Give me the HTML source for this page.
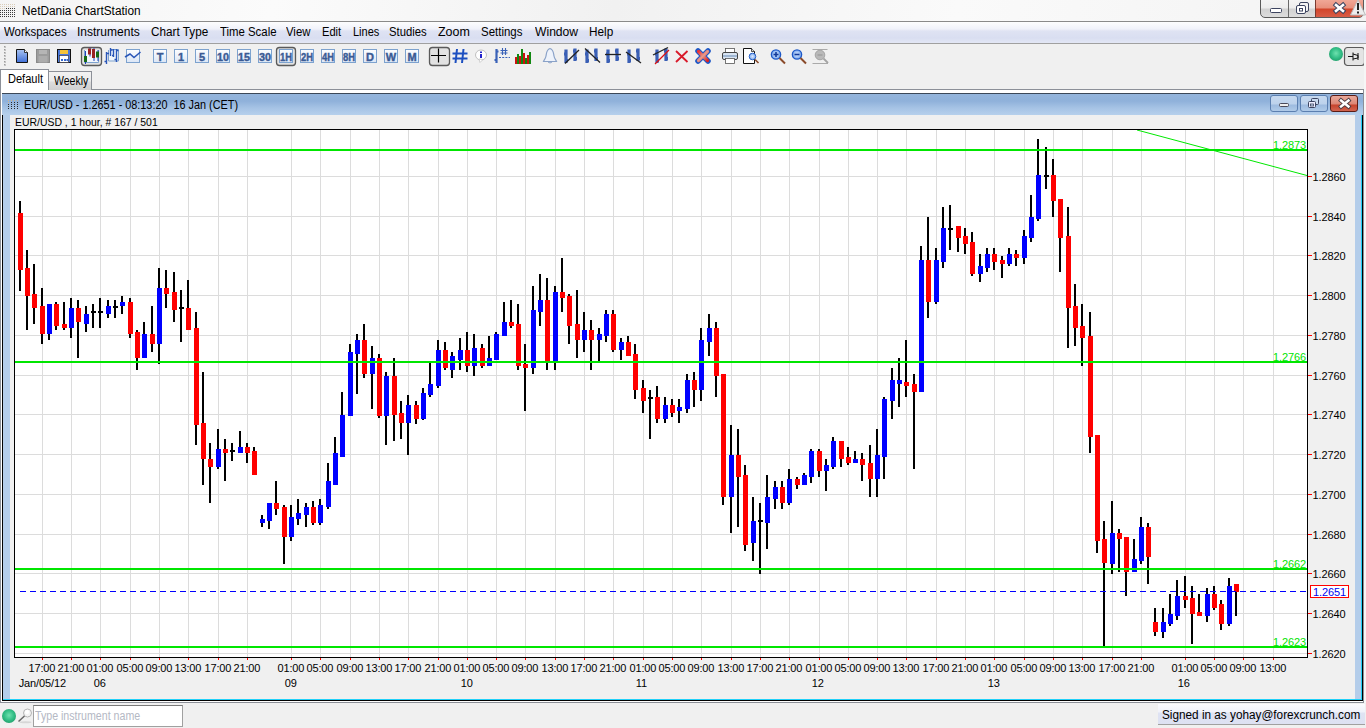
<!DOCTYPE html>
<html><head><meta charset="utf-8"><title>NetDania ChartStation</title>
<style>
html,body{margin:0;padding:0}
body{width:1366px;height:728px;position:relative;overflow:hidden;background:#f0f0f0;font-family:"Liberation Sans",Arial,sans-serif;font-size:12px;color:#000}
.a{position:absolute}
.t{position:absolute;white-space:nowrap;line-height:1}
#titlebar{left:0;top:0;width:1366px;height:21px;background:linear-gradient(100deg,#f4f4f4 0%,#fbfbfb 20%,#f1f1f1 45%,#fafafa 70%,#f3f3f3 100%)}
#menubar{left:0;top:22px;width:1366px;height:21px;background:linear-gradient(#fdfdfe 0,#f0f2fa 7px,#dfe3f3 9px,#d9def1 16px,#e3e7f5 21px)}
.mi{position:absolute;top:26px;font-size:12.5px;white-space:nowrap;line-height:14px;color:#000}
.tb{position:absolute;top:49px;width:12px;height:12px;border:1px solid #7da2ce;background:linear-gradient(#fdfeff,#dfe9f7);font:bold 10px "Liberation Sans",sans-serif;color:#3a5a94;text-align:center;line-height:12px;letter-spacing:-0.5px}
.ax{position:absolute;font-size:11px;line-height:11px;white-space:nowrap;color:#000;letter-spacing:-0.11px}
</style></head><body>

<div class="a" id="titlebar"></div>
<div class="a" style="left:0;top:21px;width:1366px;height:1px;background:#8a8a8a"></div>
<svg class="a" style="left:0;top:3px" width="16" height="15" shape-rendering="crispEdges"><rect x="0" y="1" width="1" height="1" fill="#d9ccb8"/><rect x="0" y="3" width="1" height="1" fill="#d9ccb8"/><rect x="0" y="5" width="1" height="1" fill="#d9ccb8"/><rect x="0" y="7" width="1" height="1" fill="#3a3a3a"/><rect x="0" y="9" width="1" height="1" fill="#3a3a3a"/><rect x="0" y="11" width="1" height="1" fill="#3a3a3a"/><rect x="0" y="13" width="1" height="1" fill="#3a3a3a"/><rect x="2" y="1" width="1" height="1" fill="#d9ccb8"/><rect x="2" y="3" width="1" height="1" fill="#d9ccb8"/><rect x="2" y="5" width="1" height="1" fill="#d9ccb8"/><rect x="2" y="7" width="1" height="1" fill="#3a3a3a"/><rect x="2" y="9" width="1" height="1" fill="#3a3a3a"/><rect x="2" y="11" width="1" height="1" fill="#3a3a3a"/><rect x="2" y="13" width="1" height="1" fill="#3a3a3a"/><rect x="4" y="1" width="1" height="1" fill="#d9ccb8"/><rect x="4" y="3" width="1" height="1" fill="#d9ccb8"/><rect x="4" y="5" width="1" height="1" fill="#d9ccb8"/><rect x="4" y="7" width="1" height="1" fill="#3a3a3a"/><rect x="4" y="9" width="1" height="1" fill="#3a3a3a"/><rect x="4" y="11" width="1" height="1" fill="#3a3a3a"/><rect x="4" y="13" width="1" height="1" fill="#3a3a3a"/><rect x="6" y="1" width="1" height="1" fill="#d9ccb8"/><rect x="6" y="3" width="1" height="1" fill="#d9ccb8"/><rect x="6" y="5" width="1" height="1" fill="#3a3a3a"/><rect x="6" y="7" width="1" height="1" fill="#3a3a3a"/><rect x="6" y="9" width="1" height="1" fill="#3a3a3a"/><rect x="6" y="11" width="1" height="1" fill="#3a3a3a"/><rect x="6" y="13" width="1" height="1" fill="#3a3a3a"/><rect x="8" y="1" width="1" height="1" fill="#d9ccb8"/><rect x="8" y="3" width="1" height="1" fill="#d9ccb8"/><rect x="8" y="5" width="1" height="1" fill="#3a3a3a"/><rect x="8" y="7" width="1" height="1" fill="#3a3a3a"/><rect x="8" y="9" width="1" height="1" fill="#3a3a3a"/><rect x="8" y="11" width="1" height="1" fill="#3a3a3a"/><rect x="8" y="13" width="1" height="1" fill="#3a3a3a"/><rect x="10" y="1" width="1" height="1" fill="#d9ccb8"/><rect x="10" y="3" width="1" height="1" fill="#d9ccb8"/><rect x="10" y="5" width="1" height="1" fill="#3a3a3a"/><rect x="10" y="7" width="1" height="1" fill="#3a3a3a"/><rect x="10" y="9" width="1" height="1" fill="#3a3a3a"/><rect x="10" y="11" width="1" height="1" fill="#3a3a3a"/><rect x="10" y="13" width="1" height="1" fill="#3a3a3a"/><rect x="12" y="1" width="1" height="1" fill="#d9ccb8"/><rect x="12" y="3" width="1" height="1" fill="#d9ccb8"/><rect x="12" y="5" width="1" height="1" fill="#3a3a3a"/><rect x="12" y="7" width="1" height="1" fill="#3a3a3a"/><rect x="12" y="9" width="1" height="1" fill="#3a3a3a"/><rect x="12" y="11" width="1" height="1" fill="#3a3a3a"/><rect x="12" y="13" width="1" height="1" fill="#3a3a3a"/><rect x="14" y="1" width="1" height="1" fill="#d9ccb8"/><rect x="14" y="3" width="1" height="1" fill="#d9ccb8"/><rect x="14" y="5" width="1" height="1" fill="#3a3a3a"/><rect x="14" y="7" width="1" height="1" fill="#3a3a3a"/><rect x="14" y="9" width="1" height="1" fill="#3a3a3a"/><rect x="14" y="11" width="1" height="1" fill="#3a3a3a"/><rect x="14" y="13" width="1" height="1" fill="#3a3a3a"/></svg>
<div class="t" id="title" style="left:22px;top:4px;font-size:12px;line-height:14px;color:#000;transform-origin:0 0;transform:scaleX(0.9877)">NetDania ChartStation</div>
<div class="a" style="left:1260px;top:-4px;width:102px;height:20px;border:1px solid #5a5a5a;border-radius:0 0 5px 5px;background:linear-gradient(#f6f6f6 0,#ededed 11px,#d2d2d2 12px,#dedede 21px);overflow:hidden">
<div class="a" style="left:55px;top:0;width:48px;height:21px;background:linear-gradient(#f3b0a0 0,#e8907c 11px,#d2452a 12px,#d9604a 21px)"></div>
<div class="a" style="left:27px;top:0;width:1px;height:21px;background:#6a6a6a"></div>
<div class="a" style="left:54px;top:0;width:1px;height:21px;background:#7a3a30"></div>
</div>
<svg class="a" style="left:1262px;top:0" width="104" height="20">
<rect x="8.5" y="8.5" width="11" height="4" rx="1" fill="#fff" stroke="#3c4460"/>
<rect x="37.500" y="2.5" width="9" height="9" rx="1.5" fill="#f3f3f3" stroke="#3c4460"/>
<rect x="34.500" y="5.5" width="9" height="8" rx="1.5" fill="#fff" stroke="#3c4460"/>
<rect x="37.500" y="8.5" width="3" height="2.5" fill="#fff" stroke="#3c4460"/>
<path d="M74 5 L81 11 M81 5 L74 11" stroke="#3c4460" stroke-width="4.600" stroke-linecap="square"/><path d="M74 5 L81 11 M81 5 L74 11" stroke="#fff" stroke-width="2.600" stroke-linecap="square"/>
<path d="M96 0 L103.500 15 L88.500 15 Z" fill="#eee" stroke="#bbb"/>
<rect x="95" y="3" width="2" height="7" fill="#222"/><rect x="95" y="11.500" width="2" height="2" fill="#222"/>
</svg>
<div class="a" id="menubar"></div>
<div class="a" style="left:0;top:43px;width:1366px;height:1px;background:#a0a0a0"></div>
<div class="t" id="m0" style="left:4.2px;top:25px;font-size:12px;line-height:14px;color:#000;transform-origin:0 0;transform:scaleX(0.9512)">Workspaces</div>
<div class="t" id="m1" style="left:76.8px;top:25px;font-size:12px;line-height:14px;color:#000;transform-origin:0 0;transform:scaleX(1.0015)">Instruments</div>
<div class="t" id="m2" style="left:150.5px;top:25px;font-size:12px;line-height:14px;color:#000;transform-origin:0 0;transform:scaleX(0.9780)">Chart Type</div>
<div class="t" id="m3" style="left:219.5px;top:25px;font-size:12px;line-height:14px;color:#000;transform-origin:0 0;transform:scaleX(0.9483)">Time Scale</div>
<div class="t" id="m4" style="left:286px;top:25px;font-size:12px;line-height:14px;color:#000;transform-origin:0 0;transform:scaleX(0.9459)">View</div>
<div class="t" id="m5" style="left:321.5px;top:25px;font-size:12px;line-height:14px;color:#000;transform-origin:0 0;transform:scaleX(0.9281)">Edit</div>
<div class="t" id="m6" style="left:352.5px;top:25px;font-size:12px;line-height:14px;color:#000;transform-origin:0 0;transform:scaleX(0.9168)">Lines</div>
<div class="t" id="m7" style="left:388.9px;top:25px;font-size:12px;line-height:14px;color:#000;transform-origin:0 0;transform:scaleX(0.9418)">Studies</div>
<div class="t" id="m8" style="left:437.6px;top:25px;font-size:12px;line-height:14px;color:#000;transform-origin:0 0;transform:scaleX(1.0395)">Zoom</div>
<div class="t" id="m9" style="left:481.3px;top:25px;font-size:12px;line-height:14px;color:#000;transform-origin:0 0;transform:scaleX(0.9548)">Settings</div>
<div class="t" id="m10" style="left:534.5px;top:25px;font-size:12px;line-height:14px;color:#000;transform-origin:0 0;transform:scaleX(1.0097)">Window</div>
<div class="t" id="m11" style="left:589.4px;top:25px;font-size:12px;line-height:14px;color:#000;transform-origin:0 0;transform:scaleX(0.9803)">Help</div>
<svg class="a" style="left:0;top:44px" width="860" height="25" viewBox="0 44 860 25"><rect x="4" y="46" width="2" height="2" fill="#c4c4c4"/><rect x="4" y="46" width="1" height="1" fill="#9a9a9a"/><rect x="4" y="49" width="2" height="2" fill="#c4c4c4"/><rect x="4" y="49" width="1" height="1" fill="#9a9a9a"/><rect x="4" y="52" width="2" height="2" fill="#c4c4c4"/><rect x="4" y="52" width="1" height="1" fill="#9a9a9a"/><rect x="4" y="55" width="2" height="2" fill="#c4c4c4"/><rect x="4" y="55" width="1" height="1" fill="#9a9a9a"/><rect x="4" y="58" width="2" height="2" fill="#c4c4c4"/><rect x="4" y="58" width="1" height="1" fill="#9a9a9a"/><rect x="4" y="61" width="2" height="2" fill="#c4c4c4"/><rect x="4" y="61" width="1" height="1" fill="#9a9a9a"/><rect x="4" y="64" width="2" height="2" fill="#c4c4c4"/><rect x="4" y="64" width="1" height="1" fill="#9a9a9a"/><defs>
<linearGradient id="gb" x1="0" y1="0" x2="0" y2="1"><stop offset="0" stop-color="#a9c4f2"/><stop offset="1" stop-color="#3f6fd8"/></linearGradient>
<linearGradient id="gbtn" x1="0" y1="0" x2="0" y2="1"><stop offset="0" stop-color="#fdfeff"/><stop offset="1" stop-color="#dbe6f6"/></linearGradient>
<linearGradient id="gx" x1="0" y1="0" x2="1" y2="1"><stop offset="0" stop-color="#e33"/><stop offset="0.5" stop-color="#e89a8a"/><stop offset="1" stop-color="#d22"/></linearGradient>
<radialGradient id="gl"><stop offset="0" stop-color="#dceaff"/><stop offset="1" stop-color="#7aa8ee"/></radialGradient>
</defs><path d="M16.500 49.500 L24.500 49.500 L27.500 52.500 L27.500 62.500 L16.500 62.500 Z" fill="url(#gb)" stroke="#111" stroke-width="1"/><path d="M24.500 49.500 L24.500 52.500 L27.500 52.500" fill="#fff" stroke="#111" stroke-width="0.8"/><rect x="36.500" y="49.500" width="13" height="13" fill="#9c9c9c" stroke="#8a8a8a"/><rect x="39" y="50" width="8" height="4" fill="#b5b5b5"/><rect x="38.500" y="56" width="9" height="6.500" fill="#acacac"/><rect x="57.500" y="49.500" width="13" height="13" fill="#4a78d8" stroke="#111"/><rect x="60" y="50" width="8" height="4" fill="#f5c33a"/><rect x="59.500" y="55.500" width="9" height="7" fill="#fff" stroke="#223" stroke-width="0.600"/><rect x="61" y="59" width="2" height="2" fill="#36c"/><rect x="64" y="59" width="2" height="2" fill="#36c"/><rect x="66.500" y="59" width="1.500" height="2" fill="#36c"/><rect x="81.500" y="47.500" width="20" height="18" rx="3" fill="#e2e2e2" stroke="#5a5a5a" stroke-width="1.300"/><path d="M84.500 50 L84.500 62.500 L98.500 62.500 L98.500 50" fill="#f2f6fc" stroke="#7da2ce" stroke-width="1"/><rect x="85" y="51" width="1" height="13" fill="#24b"/><rect x="84" y="56" width="3" height="6" fill="#176a17"/><rect x="89.500" y="47.500" width="1" height="9" fill="#24b"/><rect x="88" y="48.500" width="3" height="6" fill="#922"/><rect x="93.500" y="48" width="1" height="13" fill="#24b"/><rect x="92" y="49" width="3" height="9" fill="#922"/><rect x="97.500" y="50" width="1" height="11" fill="#24b"/><rect x="96" y="51.500" width="3" height="6" fill="#176a17"/><path d="M108.500 50 L108.500 61 L118.500 61 L118.500 49.500 L110 49.500" fill="#f2f6fc" stroke="#7da2ce"/><path d="M106.500 52 L106.500 64 M104.500 61.500 L106.500 61.500 M106.500 53.500 L109 53.500 M110.500 48 L110.500 56 M110.500 50 L112.500 50 M113.500 49 L113.500 57 M112 55.500 L113.500 55.500 M116.500 49 L116.500 62 M114.500 59.500 L116.500 59.500 M116.500 50.500 L118.500 50.500" stroke="#2a56b8" stroke-width="1.400" fill="none"/><rect x="126.500" y="49.500" width="13" height="13" fill="url(#gbtn)" stroke="#7da2ce"/><path d="M125 57 L130 54 L134 57.500 L140.500 52" fill="none" stroke="#2a56b8" stroke-width="1.500"/><rect x="153.5" y="49.500" width="13" height="13" fill="url(#gbtn)" stroke="#7da2ce"/><text x="160" y="60.500" text-anchor="middle" font-family="Liberation Sans,sans-serif" font-weight="bold" font-size="11" fill="#3a5a94" stroke="#3a5a94" stroke-width="0.400">T</text><rect x="174.5" y="49.500" width="13" height="13" fill="url(#gbtn)" stroke="#7da2ce"/><text x="181" y="60.500" text-anchor="middle" font-family="Liberation Sans,sans-serif" font-weight="bold" font-size="11" fill="#3a5a94" stroke="#3a5a94" stroke-width="0.400">1</text><rect x="195.5" y="49.500" width="13" height="13" fill="url(#gbtn)" stroke="#7da2ce"/><text x="202" y="60.500" text-anchor="middle" font-family="Liberation Sans,sans-serif" font-weight="bold" font-size="11" fill="#3a5a94" stroke="#3a5a94" stroke-width="0.400">5</text><rect x="216.5" y="49.500" width="13" height="13" fill="url(#gbtn)" stroke="#7da2ce"/><text x="223" y="60.500" text-anchor="middle" font-family="Liberation Sans,sans-serif" font-weight="bold" font-size="11" textLength="12" lengthAdjust="spacingAndGlyphs" fill="#3a5a94" stroke="#3a5a94" stroke-width="0.400">10</text><rect x="237.5" y="49.500" width="13" height="13" fill="url(#gbtn)" stroke="#7da2ce"/><text x="244" y="60.500" text-anchor="middle" font-family="Liberation Sans,sans-serif" font-weight="bold" font-size="11" textLength="12" lengthAdjust="spacingAndGlyphs" fill="#3a5a94" stroke="#3a5a94" stroke-width="0.400">15</text><rect x="258.5" y="49.500" width="13" height="13" fill="url(#gbtn)" stroke="#7da2ce"/><text x="265" y="60.500" text-anchor="middle" font-family="Liberation Sans,sans-serif" font-weight="bold" font-size="11" textLength="12" lengthAdjust="spacingAndGlyphs" fill="#3a5a94" stroke="#3a5a94" stroke-width="0.400">30</text><rect x="276.5" y="47.500" width="19" height="18" rx="3" fill="#e2e2e2" stroke="#5a5a5a" stroke-width="1.300"/><rect x="279.5" y="49.500" width="13" height="13" fill="url(#gbtn)" stroke="#7da2ce"/><text x="286" y="60.500" text-anchor="middle" font-family="Liberation Sans,sans-serif" font-weight="bold" font-size="11" textLength="12" lengthAdjust="spacingAndGlyphs" fill="#3a5a94" stroke="#3a5a94" stroke-width="0.400">1H</text><rect x="300.5" y="49.500" width="13" height="13" fill="url(#gbtn)" stroke="#7da2ce"/><text x="307" y="60.500" text-anchor="middle" font-family="Liberation Sans,sans-serif" font-weight="bold" font-size="11" textLength="12" lengthAdjust="spacingAndGlyphs" fill="#3a5a94" stroke="#3a5a94" stroke-width="0.400">2H</text><rect x="321.5" y="49.500" width="13" height="13" fill="url(#gbtn)" stroke="#7da2ce"/><text x="328" y="60.500" text-anchor="middle" font-family="Liberation Sans,sans-serif" font-weight="bold" font-size="11" textLength="12" lengthAdjust="spacingAndGlyphs" fill="#3a5a94" stroke="#3a5a94" stroke-width="0.400">4H</text><rect x="342.5" y="49.500" width="13" height="13" fill="url(#gbtn)" stroke="#7da2ce"/><text x="349" y="60.500" text-anchor="middle" font-family="Liberation Sans,sans-serif" font-weight="bold" font-size="11" textLength="12" lengthAdjust="spacingAndGlyphs" fill="#3a5a94" stroke="#3a5a94" stroke-width="0.400">8H</text><rect x="363.5" y="49.500" width="13" height="13" fill="url(#gbtn)" stroke="#7da2ce"/><text x="370" y="60.500" text-anchor="middle" font-family="Liberation Sans,sans-serif" font-weight="bold" font-size="11" fill="#3a5a94" stroke="#3a5a94" stroke-width="0.400">D</text><rect x="384.5" y="49.500" width="13" height="13" fill="url(#gbtn)" stroke="#7da2ce"/><text x="391" y="60.500" text-anchor="middle" font-family="Liberation Sans,sans-serif" font-weight="bold" font-size="11" fill="#3a5a94" stroke="#3a5a94" stroke-width="0.400">W</text><rect x="405.5" y="49.500" width="13" height="13" fill="url(#gbtn)" stroke="#7da2ce"/><text x="412" y="60.500" text-anchor="middle" font-family="Liberation Sans,sans-serif" font-weight="bold" font-size="11" fill="#3a5a94" stroke="#3a5a94" stroke-width="0.400">M</text><rect x="429.500" y="47.500" width="20" height="18" rx="3" fill="#e2e2e2" stroke="#5a5a5a" stroke-width="1.300"/><path d="M431 55.500 L446 55.500 M438.500 48.500 L438.500 62.500" stroke="#000" stroke-width="1.200"/><path d="M457 49 L455.500 63 M463.500 49 L462 63 M452.500 53.500 L467.500 53.500 M452.500 58.500 L467.500 58.500" stroke="#1c4fc0" stroke-width="2" fill="none"/><ellipse cx="481" cy="55" rx="5.500" ry="5" fill="#fff" stroke="#c0c0c0"/><path d="M479 59 L480 62.500 L483 59.500 Z" fill="#fff" stroke="#c0c0c0" stroke-width="0.700"/><rect x="480" y="54" width="2" height="4" fill="#22c"/><rect x="480" y="51.500" width="2" height="1.500" fill="#22c"/><path d="M496.500 49 L496.500 63 M494.500 60 L496.500 60 M496.500 51.500 L498.500 51.500" stroke="#3a62b8" stroke-width="2.200" fill="none"/><path d="M502.500 48 L502.500 55 M505.500 48 L505.500 55 M500.500 50.500 L507.500 50.500 M500.500 53 L507.500 53" stroke="#3a62b8" stroke-width="1.100" fill="none"/><path d="M499 57.500 L510 57.500" stroke="#3a62b8" stroke-width="1.200" stroke-dasharray="2 1.200"/><rect x="515" y="57" width="2" height="7" fill="#c11"/><rect x="517" y="54" width="2" height="10" fill="#181"/><rect x="519" y="56" width="2" height="8" fill="#c11"/><rect x="521" y="49" width="2" height="15" fill="#181"/><rect x="523" y="53" width="2" height="11" fill="#c11"/><rect x="525" y="58" width="2" height="6" fill="#181"/><rect x="527" y="55" width="2" height="9" fill="#c11"/><rect x="529" y="52" width="2" height="12" fill="#181"/><path d="M550 48.500 C546.500 49.500 546.500 53 546 56 C545.500 59 544 60 543.500 61.500 L556.500 61.500 C556 60 554.500 59 554 56 C553.500 53 553.500 49.500 550 48.500 Z" fill="#eef3fb" stroke="#8aa2c8" stroke-width="1.200"/><path d="M548 62 Q550 64 552 62" stroke="#8aa2c8" fill="none"/><path d="M566 49.500 L566 63 M564 54 L566 54 M566 60.500 L568 60.500 M575 48.500 L575 61 M573 51 L575 51 M575 58.500 L577 58.500" stroke="#3a5fb5" stroke-width="3.200" fill="none"/><path d="M565 63.500 L579 50" stroke="#222" stroke-width="1.300"/><path d="M587 49.500 L587 63 M585 54 L587 54 M587 60.500 L589 60.500 M596 48.500 L596 61 M594 51 L596 51 M596 58.500 L598 58.500" stroke="#3a5fb5" stroke-width="3.200" fill="none"/><path d="M585 48.500 L600 62.500" stroke="#222" stroke-width="1.300"/><path d="M608 49.500 L608 63 M606 54 L608 54 M608 60.500 L610 60.500 M617 48.500 L617 61 M615 51 L617 51 M617 58.500 L619 58.500" stroke="#3a5fb5" stroke-width="3.200" fill="none"/><path d="M605 54.500 L621 54.500" stroke="#222" stroke-width="1.300"/><path d="M629 49.500 L629 63 M627 54 L629 54 M629 60.500 L631 60.500 M638 48.500 L638 61 M636 51 L638 51 M638 58.500 L640 58.500" stroke="#3a5fb5" stroke-width="3.200" fill="none"/><path d="M626 52 L641 63" stroke="#222" stroke-width="1.300"/><path d="M657 49.500 L657 63 M655 54 L657 54 M657 60.500 L659 60.500 M666 48.500 L666 61 M664 51 L666 51 M666 58.500 L668 58.500" stroke="#3a5fb5" stroke-width="3.200" fill="none"/><path d="M653 55 L668 47.500" stroke="#222" stroke-width="1.300"/><path d="M655 64 L669 50" stroke="#d11" stroke-width="1.300"/><path d="M676 51 L687.500 62 M687.500 51 L676 62" stroke="#d91a2a" stroke-width="1.800"/><path d="M698 51 L708 61 M708 51 L698 61" stroke="#1c58c8" stroke-width="5.500" stroke-linecap="round"/><path d="M698.500 51.500 L707.500 60.500 M707.500 51.500 L698.500 60.500" stroke="url(#gx)" stroke-width="3.200" stroke-linecap="round"/><rect x="725.500" y="48.500" width="9" height="5" fill="#fff" stroke="#555" stroke-width="0.800"/><rect x="722.500" y="52.500" width="15" height="7" rx="1.500" fill="#d8e4f2" stroke="#444"/><rect x="723" y="55" width="14" height="2" fill="#9fb6d2"/><rect x="725.500" y="58.500" width="9" height="5" fill="#fff" stroke="#555" stroke-width="0.800"/><path d="M743.500 48.500 L751.500 48.500 L754.500 51.500 L754.500 63.500 L743.500 63.500 Z" fill="#fff" stroke="#111"/><path d="M751.500 48.500 L751.500 51.500 L754.500 51.500" fill="#ddd" stroke="#111" stroke-width="0.700"/><circle cx="752.500" cy="56.500" r="3.300" fill="url(#gl)" stroke="#2a62c8" stroke-width="1"/><path d="M755 59.500 L758.500 63" stroke="#8a4a2a" stroke-width="1.600"/><circle cx="776" cy="54.500" r="4.600" fill="url(#gl)" stroke="#1c58c8" stroke-width="1.400"/><path d="M779.5 58 L785 63.500" stroke="#8a4a2a" stroke-width="2"/><path d="M773.5 54.500 L778.5 54.500" stroke="#123a9a" stroke-width="1.600"/><path d="M776 52 L776 57" stroke="#123a9a" stroke-width="1.600"/><circle cx="797" cy="54.500" r="4.600" fill="url(#gl)" stroke="#1c58c8" stroke-width="1.400"/><path d="M800.5 58 L806 63.500" stroke="#8a4a2a" stroke-width="2"/><path d="M794.5 54.500 L799.5 54.500" stroke="#123a9a" stroke-width="1.600"/><path d="M812.500 49.500 L827.500 49.500 M812.500 63.500 L828 63.500" stroke="#aaa" stroke-width="1"/><circle cx="820" cy="55" r="4.800" fill="#b9b9b9" stroke="#a4a4a4"/><path d="M823.500 58.500 L828 63" stroke="#a4a4a4" stroke-width="1.800"/><path d="M817.500 55 L822.500 55" stroke="#999" stroke-width="1.200"/></svg><div class="a" style="left:1329px;top:47px;width:14px;height:14px;border-radius:50%;background:radial-gradient(circle at 50% 45%,#6fe0ae 0,#35c088 45%,#138a58 100%)"></div><svg class="a" style="left:1343px;top:46px" width="23" height="22"><rect x="1.500" y="1.500" width="20" height="18" rx="3" fill="#e4e4e4" stroke="#5a5a5a" stroke-width="1.200"/><path d="M5 10.500 L10 10.500 M10 6.500 L10 14.500 M10 8 L15 9.500 L15 12 L10 13 M15 7 L15 14" stroke="#111" stroke-width="1" fill="none"/></svg>
<div class="a" style="left:0;top:89px;width:1364px;height:1px;background:#8c9098"></div>
<div class="a" style="left:0;top:90px;width:1px;height:613px;background:#8c9098"></div>
<div class="a" style="left:1px;top:90px;width:1362px;height:612px;background:#fff"></div>
<div class="a" style="left:1363px;top:89px;width:1px;height:614px;background:#8c9098"></div>
<div class="a" style="left:0;top:702px;width:1364px;height:1px;background:#8c9098"></div>
<div class="a" style="left:1364px;top:44px;width:2px;height:660px;background:#f6f6f6"></div>
<div class="a" style="left:49px;top:71px;width:42px;height:18px;border:1px solid #8c9098;border-bottom:none;border-left:none;background:linear-gradient(#f2f2f2 0,#ebebeb 9px,#dcdcdc 10px,#d0d0d0 18px)"></div>
<div class="a" style="left:0px;top:69px;width:47px;height:20px;border:1px solid #8c9098;border-bottom:none;background:#fff"></div>

<div class="t" id="tab1" style="left:7.5px;top:72px;font-size:12px;line-height:14px;color:#000;transform-origin:0 0;transform:scaleX(0.9203)">Default</div>
<div class="t" id="tab2" style="left:53.7px;top:73.5px;font-size:12px;line-height:14px;color:#000;transform-origin:0 0;transform:scaleX(0.8767)">Weekly</div>
<div class="a" style="left:2px;top:93px;width:1361px;height:1px;background:#3c4858"></div>
<div class="a" style="left:2px;top:94px;width:1360px;height:605px;background:#b4cdea"></div>
<div class="a" id="ftitle" style="left:2px;top:94px;width:1361px;height:21px;background:linear-gradient(#94b5dc 0,#8fb1da 7px,#a6c3e5 14px,#b6d0ec 21px)"></div>
<div class="a" style="left:2px;top:115px;width:1px;height:586px;background:#000"></div>
<div class="a" style="left:1361px;top:115px;width:1px;height:585px;background:#20d0f8"></div>
<div class="a" style="left:1362px;top:115px;width:1px;height:586px;background:#000"></div>
<div class="a" style="left:3px;top:699px;width:1359px;height:1px;background:#20d0f8"></div>
<div class="a" style="left:2px;top:700px;width:1361px;height:1px;background:#000"></div>
<div class="a" style="left:10px;top:115px;width:1345px;height:584px;background:#f0f0f0"></div>

<div class="t" id="ft" style="left:23.8px;top:98px;font-size:12px;line-height:14px;color:#000;transform-origin:0 0;transform:scaleX(0.9038)">EUR/USD - 1.2651 - 08:13:20&nbsp; 16 Jan (CET)</div>
<div class="t" id="sub" style="left:14.5px;top:117px;font-size:11px;line-height:11px;color:#000;transform-origin:0 0;transform:scaleX(0.9487)">EUR/USD , 1 hour, # 167 / 501</div>
<svg class="a" style="left:7px;top:99px" width="12" height="11" shape-rendering="crispEdges"><rect x="1" y="1" width="1" height="1" fill="#d2b48c"/><rect x="1" y="3" width="1" height="1" fill="#d2b48c"/><rect x="1" y="5" width="1" height="1" fill="#2a2a2a"/><rect x="1" y="7" width="1" height="1" fill="#2a2a2a"/><rect x="1" y="9" width="1" height="1" fill="#2a2a2a"/><rect x="4" y="1" width="1" height="1" fill="#d2b48c"/><rect x="4" y="3" width="1" height="1" fill="#2a2a2a"/><rect x="4" y="5" width="1" height="1" fill="#2a2a2a"/><rect x="4" y="7" width="1" height="1" fill="#2a2a2a"/><rect x="4" y="9" width="1" height="1" fill="#2a2a2a"/><rect x="7" y="1" width="1" height="1" fill="#d2b48c"/><rect x="7" y="3" width="1" height="1" fill="#2a2a2a"/><rect x="7" y="5" width="1" height="1" fill="#2a2a2a"/><rect x="7" y="7" width="1" height="1" fill="#2a2a2a"/><rect x="7" y="9" width="1" height="1" fill="#2a2a2a"/><rect x="10" y="1" width="1" height="1" fill="#d2b48c"/><rect x="10" y="3" width="1" height="1" fill="#2a2a2a"/><rect x="10" y="5" width="1" height="1" fill="#2a2a2a"/><rect x="10" y="7" width="1" height="1" fill="#2a2a2a"/><rect x="10" y="9" width="1" height="1" fill="#2a2a2a"/></svg>
<div class="a" style="left:1270px;top:95px;width:26px;height:15px;border:1px solid #5b7fb0;border-radius:3px;background:linear-gradient(#c6d9ef 0,#bdd2ec 8px,#9dbbdf 9px,#b3cdea 16px)"></div>
<div class="a" style="left:1300px;top:95px;width:26px;height:15px;border:1px solid #5b7fb0;border-radius:3px;background:linear-gradient(#c6d9ef 0,#bdd2ec 8px,#9dbbdf 9px,#b3cdea 16px)"></div>
<div class="a" style="left:1330px;top:95px;width:26px;height:15px;border:1px solid #5a1d16;border-radius:3px;background:linear-gradient(#e9a99b 0,#dc8674 8px,#c6432c 9px,#d46a55 16px)"></div>
<svg class="a" style="left:1270px;top:95px" width="90" height="17">
<rect x="9.5" y="8.5" width="9" height="3" rx="1" fill="#eee" stroke="#4a4a5a"/>
<rect x="41.500" y="3.500" width="7" height="6" rx="1" fill="#c9daef" stroke="#3c4460"/>
<rect x="38.500" y="6.500" width="7" height="6" rx="1" fill="#eef" stroke="#3c4460"/>
<rect x="40.500" y="9" width="3" height="2" fill="#cde" stroke="#3c4460" stroke-width="0.8"/>
<path d="M71 5.500 L78.500 11.500 M78.500 5.500 L71 11.500" stroke="#4a3a40" stroke-width="4.200" stroke-linecap="square"/><path d="M71 5.500 L78.500 11.500 M78.500 5.500 L71 11.500" stroke="#fff" stroke-width="2.400" stroke-linecap="square"/>
</svg>
<svg class="a" style="left:14px;top:129px" width="1294" height="529" viewBox="14 129 1294 529" shape-rendering="crispEdges"><rect x="14" y="129" width="1294" height="529" fill="#fff"/><rect x="42" y="130" width="1" height="527" fill="#dcdcdc"/><rect x="71" y="130" width="1" height="527" fill="#dcdcdc"/><rect x="100" y="130" width="1" height="527" fill="#dcdcdc"/><rect x="130" y="130" width="1" height="527" fill="#dcdcdc"/><rect x="159" y="130" width="1" height="527" fill="#dcdcdc"/><rect x="188" y="130" width="1" height="527" fill="#dcdcdc"/><rect x="218" y="130" width="1" height="527" fill="#dcdcdc"/><rect x="247" y="130" width="1" height="527" fill="#dcdcdc"/><rect x="291" y="130" width="1" height="527" fill="#dcdcdc"/><rect x="320" y="130" width="1" height="527" fill="#dcdcdc"/><rect x="350" y="130" width="1" height="527" fill="#dcdcdc"/><rect x="379" y="130" width="1" height="527" fill="#dcdcdc"/><rect x="408" y="130" width="1" height="527" fill="#dcdcdc"/><rect x="438" y="130" width="1" height="527" fill="#dcdcdc"/><rect x="467" y="130" width="1" height="527" fill="#dcdcdc"/><rect x="496" y="130" width="1" height="527" fill="#dcdcdc"/><rect x="525" y="130" width="1" height="527" fill="#dcdcdc"/><rect x="555" y="130" width="1" height="527" fill="#dcdcdc"/><rect x="584" y="130" width="1" height="527" fill="#dcdcdc"/><rect x="613" y="130" width="1" height="527" fill="#dcdcdc"/><rect x="643" y="130" width="1" height="527" fill="#dcdcdc"/><rect x="672" y="130" width="1" height="527" fill="#dcdcdc"/><rect x="701" y="130" width="1" height="527" fill="#dcdcdc"/><rect x="731" y="130" width="1" height="527" fill="#dcdcdc"/><rect x="760" y="130" width="1" height="527" fill="#dcdcdc"/><rect x="789" y="130" width="1" height="527" fill="#dcdcdc"/><rect x="819" y="130" width="1" height="527" fill="#dcdcdc"/><rect x="848" y="130" width="1" height="527" fill="#dcdcdc"/><rect x="877" y="130" width="1" height="527" fill="#dcdcdc"/><rect x="906" y="130" width="1" height="527" fill="#dcdcdc"/><rect x="936" y="130" width="1" height="527" fill="#dcdcdc"/><rect x="965" y="130" width="1" height="527" fill="#dcdcdc"/><rect x="994" y="130" width="1" height="527" fill="#dcdcdc"/><rect x="1024" y="130" width="1" height="527" fill="#dcdcdc"/><rect x="1053" y="130" width="1" height="527" fill="#dcdcdc"/><rect x="1082" y="130" width="1" height="527" fill="#dcdcdc"/><rect x="1112" y="130" width="1" height="527" fill="#dcdcdc"/><rect x="1141" y="130" width="1" height="527" fill="#dcdcdc"/><rect x="1185" y="130" width="1" height="527" fill="#dcdcdc"/><rect x="1214" y="130" width="1" height="527" fill="#dcdcdc"/><rect x="1243" y="130" width="1" height="527" fill="#dcdcdc"/><rect x="1273" y="130" width="1" height="527" fill="#dcdcdc"/><rect x="15" y="653" width="1292" height="1" fill="#dcdcdc"/><rect x="15" y="613" width="1292" height="1" fill="#dcdcdc"/><rect x="15" y="573" width="1292" height="1" fill="#dcdcdc"/><rect x="15" y="534" width="1292" height="1" fill="#dcdcdc"/><rect x="15" y="494" width="1292" height="1" fill="#dcdcdc"/><rect x="15" y="454" width="1292" height="1" fill="#dcdcdc"/><rect x="15" y="414" width="1292" height="1" fill="#dcdcdc"/><rect x="15" y="375" width="1292" height="1" fill="#dcdcdc"/><rect x="15" y="335" width="1292" height="1" fill="#dcdcdc"/><rect x="15" y="295" width="1292" height="1" fill="#dcdcdc"/><rect x="15" y="255" width="1292" height="1" fill="#dcdcdc"/><rect x="15" y="216" width="1292" height="1" fill="#dcdcdc"/><rect x="15" y="176" width="1292" height="1" fill="#dcdcdc"/><rect x="19" y="201" width="2" height="90" fill="#000"/><rect x="18" y="213" width="5" height="57" fill="#ff0000"/><rect x="26" y="250" width="2" height="80" fill="#000"/><rect x="25" y="268" width="5" height="28" fill="#ff0000"/><rect x="33" y="264" width="2" height="60" fill="#000"/><rect x="32" y="294" width="5" height="14" fill="#ff0000"/><rect x="41" y="288" width="2" height="56" fill="#000"/><rect x="40" y="306" width="5" height="28" fill="#ff0000"/><rect x="48" y="304" width="2" height="36" fill="#000"/><rect x="47" y="304" width="5" height="30" fill="#0000ff"/><rect x="55" y="302" width="2" height="28" fill="#000"/><rect x="54" y="304" width="5" height="22" fill="#ff0000"/><rect x="63" y="302" width="2" height="28" fill="#000"/><rect x="62" y="324" width="5" height="4" fill="#ff0000"/><rect x="70" y="298" width="2" height="40" fill="#000"/><rect x="69" y="308" width="5" height="20" fill="#0000ff"/><rect x="77" y="300" width="2" height="58" fill="#000"/><rect x="76" y="308" width="5" height="14" fill="#ff0000"/><rect x="85" y="306" width="2" height="26" fill="#000"/><rect x="84" y="314" width="5" height="10" fill="#0000ff"/><rect x="92" y="304" width="2" height="24" fill="#000"/><rect x="91" y="311" width="5" height="2" fill="#000"/><rect x="99" y="298" width="2" height="30" fill="#000"/><rect x="98" y="311" width="5" height="2" fill="#000"/><rect x="107" y="300" width="2" height="18" fill="#000"/><rect x="106" y="306" width="5" height="8" fill="#0000ff"/><rect x="114" y="300" width="2" height="18" fill="#000"/><rect x="113" y="306" width="5" height="2" fill="#000"/><rect x="121" y="296" width="2" height="18" fill="#000"/><rect x="120" y="302" width="5" height="4" fill="#0000ff"/><rect x="129" y="298" width="2" height="40" fill="#000"/><rect x="128" y="302" width="5" height="32" fill="#ff0000"/><rect x="136" y="330" width="2" height="40" fill="#000"/><rect x="135" y="332" width="5" height="26" fill="#ff0000"/><rect x="143" y="322" width="2" height="36" fill="#000"/><rect x="142" y="334" width="5" height="24" fill="#0000ff"/><rect x="151" y="306" width="2" height="46" fill="#000"/><rect x="150" y="334" width="5" height="10" fill="#ff0000"/><rect x="158" y="268" width="2" height="96" fill="#000"/><rect x="157" y="288" width="5" height="56" fill="#0000ff"/><rect x="165" y="270" width="2" height="38" fill="#000"/><rect x="164" y="288" width="5" height="6" fill="#ff0000"/><rect x="173" y="272" width="2" height="50" fill="#000"/><rect x="172" y="292" width="5" height="18" fill="#ff0000"/><rect x="180" y="290" width="2" height="52" fill="#000"/><rect x="179" y="307" width="5" height="2" fill="#000"/><rect x="187" y="280" width="2" height="50" fill="#000"/><rect x="186" y="308" width="5" height="22" fill="#ff0000"/><rect x="195" y="312" width="2" height="133" fill="#000"/><rect x="194" y="328" width="5" height="97" fill="#ff0000"/><rect x="202" y="372" width="2" height="113" fill="#000"/><rect x="201" y="423" width="5" height="36" fill="#ff0000"/><rect x="209" y="443" width="2" height="60" fill="#000"/><rect x="208" y="459" width="5" height="8" fill="#ff0000"/><rect x="217" y="429" width="2" height="40" fill="#000"/><rect x="216" y="449" width="5" height="18" fill="#0000ff"/><rect x="224" y="439" width="2" height="42" fill="#000"/><rect x="223" y="449" width="5" height="4" fill="#ff0000"/><rect x="231" y="443" width="2" height="18" fill="#000"/><rect x="230" y="450" width="5" height="2" fill="#000"/><rect x="239" y="431" width="2" height="22" fill="#000"/><rect x="238" y="447" width="5" height="6" fill="#0000ff"/><rect x="246" y="443" width="2" height="20" fill="#000"/><rect x="245" y="447" width="5" height="6" fill="#ff0000"/><rect x="253" y="447" width="2" height="28" fill="#000"/><rect x="252" y="451" width="5" height="24" fill="#ff0000"/><rect x="261" y="515" width="2" height="12" fill="#000"/><rect x="260" y="519" width="5" height="4" fill="#0000ff"/><rect x="268" y="503" width="2" height="26" fill="#000"/><rect x="267" y="503" width="5" height="18" fill="#0000ff"/><rect x="275" y="481" width="2" height="34" fill="#000"/><rect x="274" y="503" width="5" height="6" fill="#ff0000"/><rect x="283" y="505" width="2" height="59" fill="#000"/><rect x="282" y="507" width="5" height="30" fill="#ff0000"/><rect x="290" y="505" width="2" height="36" fill="#000"/><rect x="289" y="517" width="5" height="20" fill="#0000ff"/><rect x="297" y="499" width="2" height="26" fill="#000"/><rect x="296" y="513" width="5" height="6" fill="#0000ff"/><rect x="305" y="503" width="2" height="24" fill="#000"/><rect x="304" y="507" width="5" height="8" fill="#0000ff"/><rect x="312" y="501" width="2" height="24" fill="#000"/><rect x="311" y="507" width="5" height="16" fill="#ff0000"/><rect x="319" y="499" width="2" height="26" fill="#000"/><rect x="318" y="505" width="5" height="18" fill="#0000ff"/><rect x="327" y="463" width="2" height="46" fill="#000"/><rect x="326" y="481" width="5" height="26" fill="#0000ff"/><rect x="334" y="437" width="2" height="48" fill="#000"/><rect x="333" y="453" width="5" height="32" fill="#0000ff"/><rect x="341" y="392" width="2" height="65" fill="#000"/><rect x="340" y="415" width="5" height="42" fill="#0000ff"/><rect x="349" y="344" width="2" height="72" fill="#000"/><rect x="348" y="352" width="5" height="64" fill="#0000ff"/><rect x="356" y="334" width="2" height="60" fill="#000"/><rect x="355" y="340" width="5" height="14" fill="#0000ff"/><rect x="363" y="324" width="2" height="54" fill="#000"/><rect x="362" y="340" width="5" height="34" fill="#ff0000"/><rect x="371" y="346" width="2" height="63" fill="#000"/><rect x="370" y="358" width="5" height="16" fill="#0000ff"/><rect x="378" y="354" width="2" height="64" fill="#000"/><rect x="377" y="358" width="5" height="58" fill="#ff0000"/><rect x="385" y="372" width="2" height="73" fill="#000"/><rect x="384" y="376" width="5" height="40" fill="#0000ff"/><rect x="393" y="358" width="2" height="83" fill="#000"/><rect x="392" y="376" width="5" height="39" fill="#ff0000"/><rect x="400" y="401" width="2" height="38" fill="#000"/><rect x="399" y="413" width="5" height="10" fill="#ff0000"/><rect x="407" y="395" width="2" height="60" fill="#000"/><rect x="406" y="405" width="5" height="18" fill="#0000ff"/><rect x="415" y="401" width="2" height="23" fill="#000"/><rect x="414" y="405" width="5" height="14" fill="#ff0000"/><rect x="422" y="388" width="2" height="32" fill="#000"/><rect x="421" y="393" width="5" height="26" fill="#0000ff"/><rect x="429" y="362" width="2" height="35" fill="#000"/><rect x="428" y="384" width="5" height="11" fill="#0000ff"/><rect x="437" y="340" width="2" height="48" fill="#000"/><rect x="436" y="350" width="5" height="36" fill="#0000ff"/><rect x="444" y="342" width="2" height="28" fill="#000"/><rect x="443" y="350" width="5" height="18" fill="#ff0000"/><rect x="451" y="352" width="2" height="26" fill="#000"/><rect x="450" y="356" width="5" height="14" fill="#0000ff"/><rect x="459" y="338" width="2" height="32" fill="#000"/><rect x="458" y="350" width="5" height="10" fill="#0000ff"/><rect x="466" y="332" width="2" height="40" fill="#000"/><rect x="465" y="350" width="5" height="16" fill="#ff0000"/><rect x="473" y="334" width="2" height="42" fill="#000"/><rect x="472" y="348" width="5" height="18" fill="#0000ff"/><rect x="481" y="344" width="2" height="24" fill="#000"/><rect x="480" y="348" width="5" height="18" fill="#ff0000"/><rect x="488" y="336" width="2" height="30" fill="#000"/><rect x="487" y="358" width="5" height="8" fill="#0000ff"/><rect x="495" y="332" width="2" height="28" fill="#000"/><rect x="494" y="334" width="5" height="26" fill="#0000ff"/><rect x="503" y="302" width="2" height="34" fill="#000"/><rect x="502" y="322" width="5" height="14" fill="#0000ff"/><rect x="510" y="300" width="2" height="28" fill="#000"/><rect x="509" y="322" width="5" height="4" fill="#ff0000"/><rect x="517" y="304" width="2" height="66" fill="#000"/><rect x="516" y="324" width="5" height="42" fill="#ff0000"/><rect x="524" y="344" width="2" height="67" fill="#000"/><rect x="523" y="364" width="5" height="4" fill="#ff0000"/><rect x="532" y="286" width="2" height="88" fill="#000"/><rect x="531" y="310" width="5" height="58" fill="#0000ff"/><rect x="539" y="274" width="2" height="52" fill="#000"/><rect x="538" y="300" width="5" height="12" fill="#0000ff"/><rect x="546" y="278" width="2" height="92" fill="#000"/><rect x="545" y="300" width="5" height="62" fill="#ff0000"/><rect x="554" y="286" width="2" height="84" fill="#000"/><rect x="553" y="292" width="5" height="70" fill="#0000ff"/><rect x="561" y="258" width="2" height="54" fill="#000"/><rect x="560" y="292" width="5" height="6" fill="#ff0000"/><rect x="568" y="294" width="2" height="50" fill="#000"/><rect x="567" y="296" width="5" height="30" fill="#ff0000"/><rect x="576" y="290" width="2" height="68" fill="#000"/><rect x="575" y="324" width="5" height="16" fill="#ff0000"/><rect x="583" y="312" width="2" height="40" fill="#000"/><rect x="582" y="330" width="5" height="10" fill="#0000ff"/><rect x="590" y="320" width="2" height="50" fill="#000"/><rect x="589" y="330" width="5" height="10" fill="#ff0000"/><rect x="598" y="328" width="2" height="34" fill="#000"/><rect x="597" y="334" width="5" height="6" fill="#0000ff"/><rect x="605" y="310" width="2" height="32" fill="#000"/><rect x="604" y="314" width="5" height="22" fill="#0000ff"/><rect x="612" y="310" width="2" height="42" fill="#000"/><rect x="611" y="314" width="5" height="36" fill="#ff0000"/><rect x="620" y="338" width="2" height="22" fill="#000"/><rect x="619" y="342" width="5" height="8" fill="#0000ff"/><rect x="627" y="336" width="2" height="20" fill="#000"/><rect x="626" y="342" width="5" height="14" fill="#ff0000"/><rect x="634" y="344" width="2" height="55" fill="#000"/><rect x="633" y="354" width="5" height="36" fill="#ff0000"/><rect x="642" y="380" width="2" height="33" fill="#000"/><rect x="641" y="388" width="5" height="13" fill="#ff0000"/><rect x="649" y="390" width="2" height="49" fill="#000"/><rect x="648" y="397" width="5" height="2" fill="#000"/><rect x="656" y="386" width="2" height="37" fill="#000"/><rect x="655" y="397" width="5" height="22" fill="#ff0000"/><rect x="664" y="397" width="2" height="26" fill="#000"/><rect x="663" y="405" width="5" height="14" fill="#0000ff"/><rect x="671" y="399" width="2" height="18" fill="#000"/><rect x="670" y="405" width="5" height="8" fill="#ff0000"/><rect x="678" y="399" width="2" height="24" fill="#000"/><rect x="677" y="407" width="5" height="4" fill="#0000ff"/><rect x="686" y="374" width="2" height="39" fill="#000"/><rect x="685" y="380" width="5" height="29" fill="#0000ff"/><rect x="693" y="372" width="2" height="35" fill="#000"/><rect x="692" y="380" width="5" height="10" fill="#ff0000"/><rect x="700" y="328" width="2" height="73" fill="#000"/><rect x="699" y="340" width="5" height="50" fill="#0000ff"/><rect x="708" y="314" width="2" height="42" fill="#000"/><rect x="707" y="328" width="5" height="14" fill="#0000ff"/><rect x="715" y="322" width="2" height="75" fill="#000"/><rect x="714" y="328" width="5" height="48" fill="#ff0000"/><rect x="722" y="374" width="2" height="131" fill="#000"/><rect x="721" y="374" width="5" height="123" fill="#ff0000"/><rect x="730" y="425" width="2" height="108" fill="#000"/><rect x="729" y="455" width="5" height="42" fill="#0000ff"/><rect x="737" y="429" width="2" height="98" fill="#000"/><rect x="736" y="455" width="5" height="22" fill="#ff0000"/><rect x="744" y="465" width="2" height="86" fill="#000"/><rect x="743" y="475" width="5" height="70" fill="#ff0000"/><rect x="752" y="497" width="2" height="64" fill="#000"/><rect x="751" y="521" width="5" height="22" fill="#0000ff"/><rect x="759" y="503" width="2" height="71" fill="#000"/><rect x="758" y="520" width="5" height="2" fill="#000"/><rect x="766" y="475" width="2" height="74" fill="#000"/><rect x="765" y="497" width="5" height="26" fill="#0000ff"/><rect x="774" y="481" width="2" height="28" fill="#000"/><rect x="773" y="487" width="5" height="12" fill="#0000ff"/><rect x="781" y="481" width="2" height="28" fill="#000"/><rect x="780" y="487" width="5" height="16" fill="#ff0000"/><rect x="788" y="469" width="2" height="36" fill="#000"/><rect x="787" y="479" width="5" height="24" fill="#0000ff"/><rect x="796" y="477" width="2" height="12" fill="#000"/><rect x="795" y="479" width="5" height="6" fill="#ff0000"/><rect x="803" y="473" width="2" height="12" fill="#000"/><rect x="802" y="475" width="5" height="10" fill="#0000ff"/><rect x="810" y="449" width="2" height="34" fill="#000"/><rect x="809" y="451" width="5" height="26" fill="#0000ff"/><rect x="818" y="449" width="2" height="28" fill="#000"/><rect x="817" y="451" width="5" height="20" fill="#ff0000"/><rect x="825" y="459" width="2" height="32" fill="#000"/><rect x="824" y="465" width="5" height="6" fill="#0000ff"/><rect x="832" y="437" width="2" height="32" fill="#000"/><rect x="831" y="441" width="5" height="26" fill="#0000ff"/><rect x="840" y="441" width="2" height="26" fill="#000"/><rect x="839" y="441" width="5" height="18" fill="#ff0000"/><rect x="847" y="447" width="2" height="18" fill="#000"/><rect x="846" y="457" width="5" height="6" fill="#ff0000"/><rect x="854" y="451" width="2" height="12" fill="#000"/><rect x="853" y="459" width="5" height="4" fill="#0000ff"/><rect x="861" y="453" width="2" height="28" fill="#000"/><rect x="860" y="459" width="5" height="6" fill="#ff0000"/><rect x="869" y="445" width="2" height="52" fill="#000"/><rect x="868" y="463" width="5" height="16" fill="#ff0000"/><rect x="876" y="429" width="2" height="68" fill="#000"/><rect x="875" y="455" width="5" height="24" fill="#0000ff"/><rect x="883" y="397" width="2" height="82" fill="#000"/><rect x="882" y="399" width="5" height="58" fill="#0000ff"/><rect x="891" y="368" width="2" height="51" fill="#000"/><rect x="890" y="380" width="5" height="21" fill="#0000ff"/><rect x="898" y="358" width="2" height="49" fill="#000"/><rect x="897" y="380" width="5" height="4" fill="#0000ff"/><rect x="905" y="340" width="2" height="57" fill="#000"/><rect x="904" y="382" width="5" height="4" fill="#ff0000"/><rect x="913" y="374" width="2" height="95" fill="#000"/><rect x="912" y="384" width="5" height="8" fill="#ff0000"/><rect x="920" y="246" width="2" height="146" fill="#000"/><rect x="919" y="260" width="5" height="132" fill="#0000ff"/><rect x="927" y="217" width="2" height="101" fill="#000"/><rect x="926" y="260" width="5" height="42" fill="#ff0000"/><rect x="935" y="248" width="2" height="56" fill="#000"/><rect x="934" y="260" width="5" height="42" fill="#0000ff"/><rect x="942" y="207" width="2" height="61" fill="#000"/><rect x="941" y="228" width="5" height="34" fill="#0000ff"/><rect x="949" y="205" width="2" height="45" fill="#000"/><rect x="948" y="228" width="5" height="2" fill="#000"/><rect x="957" y="226" width="2" height="26" fill="#000"/><rect x="956" y="226" width="5" height="12" fill="#ff0000"/><rect x="964" y="228" width="2" height="26" fill="#000"/><rect x="963" y="236" width="5" height="8" fill="#ff0000"/><rect x="971" y="232" width="2" height="44" fill="#000"/><rect x="970" y="242" width="5" height="32" fill="#ff0000"/><rect x="979" y="254" width="2" height="28" fill="#000"/><rect x="978" y="266" width="5" height="8" fill="#0000ff"/><rect x="986" y="248" width="2" height="24" fill="#000"/><rect x="985" y="254" width="5" height="14" fill="#0000ff"/><rect x="993" y="248" width="2" height="22" fill="#000"/><rect x="992" y="254" width="5" height="8" fill="#ff0000"/><rect x="1001" y="256" width="2" height="22" fill="#000"/><rect x="1000" y="260" width="5" height="4" fill="#ff0000"/><rect x="1008" y="248" width="2" height="18" fill="#000"/><rect x="1007" y="254" width="5" height="10" fill="#0000ff"/><rect x="1015" y="250" width="2" height="16" fill="#000"/><rect x="1014" y="254" width="5" height="4" fill="#ff0000"/><rect x="1023" y="230" width="2" height="34" fill="#000"/><rect x="1022" y="236" width="5" height="22" fill="#0000ff"/><rect x="1030" y="195" width="2" height="47" fill="#000"/><rect x="1029" y="217" width="5" height="21" fill="#0000ff"/><rect x="1037" y="139" width="2" height="82" fill="#000"/><rect x="1036" y="175" width="5" height="44" fill="#0000ff"/><rect x="1045" y="147" width="2" height="42" fill="#000"/><rect x="1044" y="175" width="5" height="2" fill="#000"/><rect x="1052" y="159" width="2" height="58" fill="#000"/><rect x="1051" y="175" width="5" height="26" fill="#ff0000"/><rect x="1059" y="199" width="2" height="73" fill="#000"/><rect x="1058" y="199" width="5" height="39" fill="#ff0000"/><rect x="1067" y="207" width="2" height="141" fill="#000"/><rect x="1066" y="236" width="5" height="72" fill="#ff0000"/><rect x="1074" y="284" width="2" height="62" fill="#000"/><rect x="1073" y="306" width="5" height="22" fill="#ff0000"/><rect x="1081" y="304" width="2" height="62" fill="#000"/><rect x="1080" y="326" width="5" height="12" fill="#ff0000"/><rect x="1089" y="312" width="2" height="141" fill="#000"/><rect x="1088" y="336" width="5" height="101" fill="#ff0000"/><rect x="1096" y="435" width="2" height="118" fill="#000"/><rect x="1095" y="435" width="5" height="106" fill="#ff0000"/><rect x="1103" y="521" width="2" height="125" fill="#000"/><rect x="1102" y="539" width="5" height="24" fill="#ff0000"/><rect x="1111" y="501" width="2" height="73" fill="#000"/><rect x="1110" y="533" width="5" height="31" fill="#0000ff"/><rect x="1118" y="529" width="2" height="43" fill="#000"/><rect x="1117" y="533" width="5" height="6" fill="#ff0000"/><rect x="1125" y="537" width="2" height="59" fill="#000"/><rect x="1124" y="537" width="5" height="35" fill="#ff0000"/><rect x="1133" y="539" width="2" height="33" fill="#000"/><rect x="1132" y="559" width="5" height="13" fill="#0000ff"/><rect x="1140" y="517" width="2" height="47" fill="#000"/><rect x="1139" y="527" width="5" height="34" fill="#0000ff"/><rect x="1147" y="523" width="2" height="61" fill="#000"/><rect x="1146" y="527" width="5" height="30" fill="#ff0000"/><rect x="1154" y="608" width="2" height="28" fill="#000"/><rect x="1153" y="622" width="5" height="10" fill="#ff0000"/><rect x="1162" y="608" width="2" height="30" fill="#000"/><rect x="1161" y="622" width="5" height="10" fill="#0000ff"/><rect x="1169" y="594" width="2" height="32" fill="#000"/><rect x="1168" y="614" width="5" height="10" fill="#0000ff"/><rect x="1176" y="580" width="2" height="40" fill="#000"/><rect x="1175" y="596" width="5" height="20" fill="#0000ff"/><rect x="1184" y="576" width="2" height="32" fill="#000"/><rect x="1183" y="596" width="5" height="4" fill="#ff0000"/><rect x="1191" y="586" width="2" height="58" fill="#000"/><rect x="1190" y="598" width="5" height="16" fill="#ff0000"/><rect x="1198" y="594" width="2" height="22" fill="#000"/><rect x="1197" y="612" width="5" height="4" fill="#ff0000"/><rect x="1206" y="588" width="2" height="34" fill="#000"/><rect x="1205" y="594" width="5" height="22" fill="#0000ff"/><rect x="1213" y="586" width="2" height="24" fill="#000"/><rect x="1212" y="594" width="5" height="14" fill="#ff0000"/><rect x="1220" y="600" width="2" height="30" fill="#000"/><rect x="1219" y="604" width="5" height="20" fill="#ff0000"/><rect x="1228" y="578" width="2" height="48" fill="#000"/><rect x="1227" y="586" width="5" height="38" fill="#0000ff"/><rect x="1235" y="584" width="2" height="32" fill="#000"/><rect x="1234" y="584" width="5" height="8" fill="#ff0000"/><rect x="15" y="149" width="1292" height="2" fill="#00e600"/><rect x="15" y="361" width="1292" height="2" fill="#00e600"/><rect x="15" y="568" width="1292" height="2" fill="#00e600"/><rect x="15" y="646" width="1292" height="2" fill="#00e600"/><line x1="1137" y1="130" x2="1307" y2="175.500" stroke="#00e800" stroke-width="1" shape-rendering="auto"/><line x1="20" y1="591.500" x2="1307" y2="591.500" stroke="#0000ff" stroke-width="1" stroke-dasharray="6 4"/><rect x="14.500" y="129.500" width="1293" height="528" fill="none" stroke="#000" stroke-width="1"/></svg>
<div class="ax" style="left:1240px;width:66px;text-align:right;top:140px;color:#00e400">1.2873</div>
<div class="ax" style="left:1240px;width:66px;text-align:right;top:352px;color:#00e400">1.2766</div>
<div class="ax" style="left:1240px;width:66px;text-align:right;top:559px;color:#00e400">1.2662</div>
<div class="ax" style="left:1240px;width:66px;text-align:right;top:637px;color:#00e400">1.2623</div>
<div class="a" style="left:1308px;top:653px;width:4px;height:1px;background:#f00"></div>
<div class="ax" style="left:1312.6px;top:649px">1.2620</div>
<div class="a" style="left:1308px;top:613px;width:4px;height:1px;background:#f00"></div>
<div class="ax" style="left:1312.6px;top:609px">1.2640</div>
<div class="a" style="left:1308px;top:573px;width:4px;height:1px;background:#f00"></div>
<div class="ax" style="left:1312.6px;top:569px">1.2660</div>
<div class="a" style="left:1308px;top:534px;width:4px;height:1px;background:#f00"></div>
<div class="ax" style="left:1312.6px;top:530px">1.2680</div>
<div class="a" style="left:1308px;top:494px;width:4px;height:1px;background:#f00"></div>
<div class="ax" style="left:1312.6px;top:490px">1.2700</div>
<div class="a" style="left:1308px;top:454px;width:4px;height:1px;background:#f00"></div>
<div class="ax" style="left:1312.6px;top:450px">1.2720</div>
<div class="a" style="left:1308px;top:414px;width:4px;height:1px;background:#f00"></div>
<div class="ax" style="left:1312.6px;top:410px">1.2740</div>
<div class="a" style="left:1308px;top:375px;width:4px;height:1px;background:#f00"></div>
<div class="ax" style="left:1312.6px;top:371px">1.2760</div>
<div class="a" style="left:1308px;top:335px;width:4px;height:1px;background:#f00"></div>
<div class="ax" style="left:1312.6px;top:331px">1.2780</div>
<div class="a" style="left:1308px;top:295px;width:4px;height:1px;background:#f00"></div>
<div class="ax" style="left:1312.6px;top:291px">1.2800</div>
<div class="a" style="left:1308px;top:255px;width:4px;height:1px;background:#f00"></div>
<div class="ax" style="left:1312.6px;top:251px">1.2820</div>
<div class="a" style="left:1308px;top:216px;width:4px;height:1px;background:#f00"></div>
<div class="ax" style="left:1312.6px;top:212px">1.2840</div>
<div class="a" style="left:1308px;top:176px;width:4px;height:1px;background:#f00"></div>
<div class="ax" style="left:1312.6px;top:172px">1.2860</div>
<div class="a" style="left:1310px;top:585px;width:37px;height:11px;border:1px solid #f00;background:#fff"></div>
<div class="ax" style="left:1313px;top:587px;color:#0000f0">1.2651</div>
<div class="a" style="left:42px;top:658px;width:1px;height:2px;background:#f00"></div>
<div class="ax" style="left:21.4px;width:41px;text-align:center;top:663px">17:00</div>
<div class="a" style="left:71px;top:658px;width:1px;height:2px;background:#f00"></div>
<div class="ax" style="left:50.4px;width:41px;text-align:center;top:663px">21:00</div>
<div class="a" style="left:100px;top:658px;width:1px;height:2px;background:#f00"></div>
<div class="ax" style="left:79.4px;width:41px;text-align:center;top:663px">01:00</div>
<div class="a" style="left:130px;top:658px;width:1px;height:2px;background:#f00"></div>
<div class="ax" style="left:109.4px;width:41px;text-align:center;top:663px">05:00</div>
<div class="a" style="left:159px;top:658px;width:1px;height:2px;background:#f00"></div>
<div class="ax" style="left:138.4px;width:41px;text-align:center;top:663px">09:00</div>
<div class="a" style="left:188px;top:658px;width:1px;height:2px;background:#f00"></div>
<div class="ax" style="left:167.4px;width:41px;text-align:center;top:663px">13:00</div>
<div class="a" style="left:218px;top:658px;width:1px;height:2px;background:#f00"></div>
<div class="ax" style="left:197.4px;width:41px;text-align:center;top:663px">17:00</div>
<div class="a" style="left:247px;top:658px;width:1px;height:2px;background:#f00"></div>
<div class="ax" style="left:226.4px;width:41px;text-align:center;top:663px">21:00</div>
<div class="a" style="left:291px;top:658px;width:1px;height:2px;background:#f00"></div>
<div class="ax" style="left:270.4px;width:41px;text-align:center;top:663px">01:00</div>
<div class="a" style="left:320px;top:658px;width:1px;height:2px;background:#f00"></div>
<div class="ax" style="left:299.4px;width:41px;text-align:center;top:663px">05:00</div>
<div class="a" style="left:350px;top:658px;width:1px;height:2px;background:#f00"></div>
<div class="ax" style="left:329.4px;width:41px;text-align:center;top:663px">09:00</div>
<div class="a" style="left:379px;top:658px;width:1px;height:2px;background:#f00"></div>
<div class="ax" style="left:358.4px;width:41px;text-align:center;top:663px">13:00</div>
<div class="a" style="left:408px;top:658px;width:1px;height:2px;background:#f00"></div>
<div class="ax" style="left:387.4px;width:41px;text-align:center;top:663px">17:00</div>
<div class="a" style="left:438px;top:658px;width:1px;height:2px;background:#f00"></div>
<div class="ax" style="left:417.4px;width:41px;text-align:center;top:663px">21:00</div>
<div class="a" style="left:467px;top:658px;width:1px;height:2px;background:#f00"></div>
<div class="ax" style="left:446.4px;width:41px;text-align:center;top:663px">01:00</div>
<div class="a" style="left:496px;top:658px;width:1px;height:2px;background:#f00"></div>
<div class="ax" style="left:475.4px;width:41px;text-align:center;top:663px">05:00</div>
<div class="a" style="left:525px;top:658px;width:1px;height:2px;background:#f00"></div>
<div class="ax" style="left:504.4px;width:41px;text-align:center;top:663px">09:00</div>
<div class="a" style="left:555px;top:658px;width:1px;height:2px;background:#f00"></div>
<div class="ax" style="left:534.4px;width:41px;text-align:center;top:663px">13:00</div>
<div class="a" style="left:584px;top:658px;width:1px;height:2px;background:#f00"></div>
<div class="ax" style="left:563.4px;width:41px;text-align:center;top:663px">17:00</div>
<div class="a" style="left:613px;top:658px;width:1px;height:2px;background:#f00"></div>
<div class="ax" style="left:592.4px;width:41px;text-align:center;top:663px">21:00</div>
<div class="a" style="left:643px;top:658px;width:1px;height:2px;background:#f00"></div>
<div class="ax" style="left:622.4px;width:41px;text-align:center;top:663px">01:00</div>
<div class="a" style="left:672px;top:658px;width:1px;height:2px;background:#f00"></div>
<div class="ax" style="left:651.4px;width:41px;text-align:center;top:663px">05:00</div>
<div class="a" style="left:701px;top:658px;width:1px;height:2px;background:#f00"></div>
<div class="ax" style="left:680.4px;width:41px;text-align:center;top:663px">09:00</div>
<div class="a" style="left:731px;top:658px;width:1px;height:2px;background:#f00"></div>
<div class="ax" style="left:710.4px;width:41px;text-align:center;top:663px">13:00</div>
<div class="a" style="left:760px;top:658px;width:1px;height:2px;background:#f00"></div>
<div class="ax" style="left:739.4px;width:41px;text-align:center;top:663px">17:00</div>
<div class="a" style="left:789px;top:658px;width:1px;height:2px;background:#f00"></div>
<div class="ax" style="left:768.4px;width:41px;text-align:center;top:663px">21:00</div>
<div class="a" style="left:819px;top:658px;width:1px;height:2px;background:#f00"></div>
<div class="ax" style="left:798.4px;width:41px;text-align:center;top:663px">01:00</div>
<div class="a" style="left:848px;top:658px;width:1px;height:2px;background:#f00"></div>
<div class="ax" style="left:827.4px;width:41px;text-align:center;top:663px">05:00</div>
<div class="a" style="left:877px;top:658px;width:1px;height:2px;background:#f00"></div>
<div class="ax" style="left:856.4px;width:41px;text-align:center;top:663px">09:00</div>
<div class="a" style="left:906px;top:658px;width:1px;height:2px;background:#f00"></div>
<div class="ax" style="left:885.4px;width:41px;text-align:center;top:663px">13:00</div>
<div class="a" style="left:936px;top:658px;width:1px;height:2px;background:#f00"></div>
<div class="ax" style="left:915.4px;width:41px;text-align:center;top:663px">17:00</div>
<div class="a" style="left:965px;top:658px;width:1px;height:2px;background:#f00"></div>
<div class="ax" style="left:944.4px;width:41px;text-align:center;top:663px">21:00</div>
<div class="a" style="left:994px;top:658px;width:1px;height:2px;background:#f00"></div>
<div class="ax" style="left:973.4px;width:41px;text-align:center;top:663px">01:00</div>
<div class="a" style="left:1024px;top:658px;width:1px;height:2px;background:#f00"></div>
<div class="ax" style="left:1003.4px;width:41px;text-align:center;top:663px">05:00</div>
<div class="a" style="left:1053px;top:658px;width:1px;height:2px;background:#f00"></div>
<div class="ax" style="left:1032.4px;width:41px;text-align:center;top:663px">09:00</div>
<div class="a" style="left:1082px;top:658px;width:1px;height:2px;background:#f00"></div>
<div class="ax" style="left:1061.4px;width:41px;text-align:center;top:663px">13:00</div>
<div class="a" style="left:1112px;top:658px;width:1px;height:2px;background:#f00"></div>
<div class="ax" style="left:1091.4px;width:41px;text-align:center;top:663px">17:00</div>
<div class="a" style="left:1141px;top:658px;width:1px;height:2px;background:#f00"></div>
<div class="ax" style="left:1120.4px;width:41px;text-align:center;top:663px">21:00</div>
<div class="a" style="left:1185px;top:658px;width:1px;height:2px;background:#f00"></div>
<div class="ax" style="left:1164.4px;width:41px;text-align:center;top:663px">01:00</div>
<div class="a" style="left:1214px;top:658px;width:1px;height:2px;background:#f00"></div>
<div class="ax" style="left:1193.4px;width:41px;text-align:center;top:663px">05:00</div>
<div class="a" style="left:1243px;top:658px;width:1px;height:2px;background:#f00"></div>
<div class="ax" style="left:1222.4px;width:41px;text-align:center;top:663px">09:00</div>
<div class="a" style="left:1273px;top:658px;width:1px;height:2px;background:#f00"></div>
<div class="ax" style="left:1252.4px;width:41px;text-align:center;top:663px">13:00</div>
<div class="ax" style="left:18.7px;top:678px">Jan/05/12</div>
<div class="ax" style="left:93.7px;top:678px">06</div>
<div class="ax" style="left:284.7px;top:678px">09</div>
<div class="ax" style="left:460.7px;top:678px">10</div>
<div class="ax" style="left:635.7px;top:678px">11</div>
<div class="ax" style="left:811.7px;top:678px">12</div>
<div class="ax" style="left:987.7px;top:678px">13</div>
<div class="ax" style="left:1177.7px;top:678px">16</div>
<div class="a" style="left:0;top:703px;width:1366px;height:25px;background:#f0f0f0"></div>
<div class="a" style="left:2px;top:709px;width:14px;height:14px;border-radius:50%;background:radial-gradient(circle at 50% 45%,#6fe0ae 0,#35c088 45%,#138a58 100%)"></div>
<svg class="a" style="left:17px;top:706px" width="16" height="18"><ellipse cx="8.500" cy="16.300" rx="6" ry="1" fill="#d6d6d6"/><circle cx="10.500" cy="7" r="4" fill="#f4f4f4" stroke="#b4b4b4"/><circle cx="10" cy="6" r="2" fill="#fff"/><line x1="7.500" y1="10" x2="1.500" y2="15.500" stroke="#666" stroke-width="1.500"/></svg>
<div class="a" style="left:33px;top:705px;width:148px;height:20px;border:1px solid #a0a0a0;border-top-color:#7a7a7a;background:#fff"></div>

<div class="a" style="left:1158px;top:704px;width:207px;height:20px;border-bottom:1px solid #a0a0a0;background:linear-gradient(#fbfbfe 0,#f0f2fa 8px,#dfe3f3 9px,#dde1f2 20px)"></div>

<div class="t" id="ph" style="left:34.6px;top:709px;font-size:12px;line-height:14px;color:#b4b8c4;transform-origin:0 0;transform:scaleX(0.8860)">Type instrument name</div>
<div class="t" id="signed" style="left:1162.3px;top:708px;font-size:12px;line-height:14px;color:#000;transform-origin:0 0;transform:scaleX(0.9802)">Signed in as yohay@forexcrunch.com</div>
</body></html>
